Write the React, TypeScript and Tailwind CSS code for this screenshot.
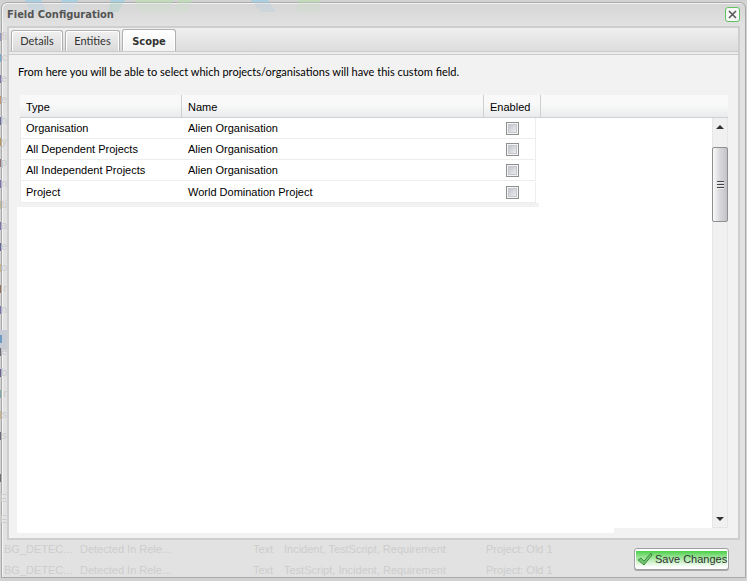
import React from 'react';

const rows = [
  { type: 'Organisation', name: 'Alien Organisation' },
  { type: 'All Dependent Projects', name: 'Alien Organisation' },
  { type: 'All Independent Projects', name: 'Alien Organisation' },
  { type: 'Project', name: 'World Domination Project' },
];

const edgeText = ['fi', 'c', 'e', 'e', 'h', 'y', 'p', 'n', 'ti', 'a', 'e', 'o', 'r', 'n', '', 'e', 'b', 'r', 'ls', 'ls', '', '', 'E', 'E'];

const edgeMarks = ['#7f86b8', '#5fa8cf', '#6b5f9a', '#c08a5a', '#56508f', '#b98a3f', '#8a5a5a', '#6a5aa0', '#b5b58a', '#6a5aa0', '#4a4a8a', '#c9ae7a', '#8a5a3a', '#6a5aa0', '', '#555555', '#54407a', '#6aa0a8', '#c9ae7a', '#55556a', '', '#555555'];

const behind = [
  ['BG_DETEC...', 'Detected In Rele...', 'Text', 'Incident, TestScript, Requirement', 'Project: Old 1'],
  ['BG_DETEC...', 'Detected In Rele...', 'Text', 'TestScript, Incident, Requirement', 'Project: Old 1'],
];

const boldFont = "font-['DejaVu_Sans_Condensed','DejaVu_Sans',sans-serif] font-bold";
const plainFont = "font-[Lato,'Noto_Sans',sans-serif]";

function Backdrop() {
  return (
    <div aria-hidden="true" className="pointer-events-none absolute inset-0">
      <svg className="absolute top-0 left-0 h-4 w-full">
        <g opacity="0.4">
          <path d="M25 0h16l6 12H31z" fill="#b9d3e2" />
          <path d="M62 0h16l-6 12H58z" fill="#c8dcec" />
          <path d="M111 0h14l-7 12h-10z" fill="#a9d3cb" />
          <path d="M135 0h38l-4 12h-30z" fill="#cfe0cb" />
          <path d="M178 0h14l-4 12h-14z" fill="#cfe0cb" />
          <path d="M251 0h17l8 12h-15z" fill="#bdd2de" />
          <path d="M298 0h22v12h-23z" fill="#cbdfc8" />
        </g>
        <path d="M25 0h16l1 2H26zM62 0h16l-1 2H61zM111 0h14l-1 2h-14zM251 0h17l1 2h-17z" fill="#a9cfe0" />
        <path d="M135 0h38v2h-38zM178 0h14v2h-14zM298 0h22v2h-22z" fill="#c2dcbb" />
      </svg>
      <div className="absolute top-[330px] left-0 h-5 w-[7px] bg-[#c7cbd3]" />
      <div className="absolute top-[335px] left-0 h-2 w-0.5 bg-[#6f9cc4]" />
      <div className="absolute top-[26px] left-0 flex w-[7px] flex-col items-end text-[11px] leading-[21px] text-[#cbcbcb]">
        {edgeText.map((t, i) => (
          <span key={i} className="block h-[21px]">{t}</span>
        ))}
      </div>
      <svg className="absolute top-[26px] left-0 h-[520px] w-0.5">
        {edgeMarks.map((c, i) => c && <rect key={i} x="0" y={i * 21 + 7} width="1" height="8" fill={c} opacity="0.8" />)}
      </svg>
    </div>
  );
}

function Tab({ label, active }: { label: string; active?: boolean }) {
  return (
    <button
      type="button"
      role="tab"
      aria-selected={!!active}
      className={`rounded-t-[3px] border border-b-0 border-[#b0b0b0] leading-5 shadow-[inset_1px_1px_0_#fff,inset_-1px_0_0_#fff] ${
        active
          ? `${boldFont} h-[22px] w-[54px] bg-linear-to-b from-white to-[#f2f2f2] pt-0.5 text-[11px] text-[#333]`
          : `${plainFont} h-[21px] bg-linear-to-b from-[#f0f0f0] to-[#dadada] text-[11px] text-[#333] ${label === 'Details' ? 'w-[52px]' : 'w-[55px]'}`
      }`}
    >
      {label}
    </button>
  );
}

function Scrollbar() {
  return (
    <div aria-hidden="true" className="absolute top-[23px] right-0 bottom-0 flex w-4 flex-col border-x border-b border-[#e6e6e6] bg-[#f0f0f0]">
      <svg viewBox="0 0 14 29" className="h-[29px] w-full shrink-0">
        <path d="M3 11l4-4 4 4z" fill="#333" />
      </svg>
      <div className="-mx-px flex h-[75px] shrink-0 flex-col items-center justify-center gap-px rounded-xs border border-[#8f8f8f] bg-linear-to-r from-[#fafafa] via-[#d8d8dc] to-[#c2c2c8]">
        <span className="h-0.5 w-[7px] border-t border-[#444] bg-[#eee]" />
        <span className="h-0.5 w-[7px] border-t border-[#444] bg-[#eee]" />
        <span className="h-0.5 w-[7px] border-t border-[#444] bg-[#eee]" />
      </div>
      <div className="flex-1" />
      <svg viewBox="0 0 14 14" className="h-[14px] w-full shrink-0">
        <path d="M3 4h8l-4 4z" fill="#333" />
      </svg>
    </div>
  );
}

function ScopeTable() {
  const th = 'border-r border-b border-[#d0d0d0] px-1.5 pt-0.5 pb-0 font-normal';
  return (
    <div className="relative flex flex-1 flex-col bg-white">
      <div className="flex bg-[#f2f2f2] pl-[3px]">
        <table className="w-full table-fixed border-separate border-spacing-0 text-left text-[11px] leading-4 text-black">
          <colgroup>
            <col className="w-[162px]" />
            <col className="w-[302px]" />
            <col className="w-[57px]" />
            <col />
          </colgroup>
          <thead>
            <tr className="h-[23px] bg-linear-to-b from-[#f9f9f9] from-40% to-[#e8eaec]">
              <th scope="col" className={th}>Type</th>
              <th scope="col" className={th}>Name</th>
              <th scope="col" className={th}>Enabled</th>
              <td className="border-b border-[#d0d0d0]" />
            </tr>
          </thead>
          <tbody className="[&>tr:last-child>td]:pt-px">
            {rows.map((r, i) => (
              <tr key={i} className="h-[21px] bg-white">
                <td className="h-[21px] border-b border-l border-[#ededed] py-0 pr-1.5 pl-[5px]">{r.type}</td>
                <td className="border-b border-[#ededed] px-1.5 py-0">{r.name}</td>
                <td className="p-0">
                  <div className="mr-[5px] flex h-[21px] items-center justify-center border-r border-b border-[#ededed] pl-[5px]">
                    <input
                      type="checkbox"
                      aria-label={`Enable ${r.type} ${r.name}`}
                      className="size-[13px] appearance-none border border-[#8e8f8f] bg-linear-to-br from-[#b8bcc4] to-[#f6f6f6] shadow-[inset_0_0_0_1px_#f4f4f4,inset_0_0_0_2px_#c4c8ce]"
                    />
                  </div>
                </td>
                <td />
              </tr>
            ))}
          </tbody>
        </table>
      </div>
      <div className="h-1 w-[522px] bg-[#f2f2f2]" />
      <Scrollbar />
    </div>
  );
}

export default function App() {
  return (
    <div className="relative flex min-h-screen flex-col bg-[#d2d2d2] px-px pt-0.5 pb-[3px] font-['Liberation_Sans',Arial,sans-serif]">
      <div role="dialog" aria-labelledby="title" className="flex flex-1 flex-col rounded-t-md border border-[#a9a9a9] bg-linear-to-b from-[#d6d6d6] to-[#e2e2e2] to-[24px] px-[5px] shadow-[inset_1px_1px_0_#f4f4f4]">
        <header className="relative z-10 flex h-[23px] items-center justify-between">
          <h1 id="title" className={`${boldFont} pt-px text-[11px] text-[#555]`}>Field Configuration</h1>
          <button type="button" aria-label="Close" className="flex size-[15px] items-center justify-center rounded-[3px] border border-[#5fc45f] bg-[#f6f6f6]">
            <svg viewBox="0 0 9 9" className="size-[9px]">
              <path d="M1 1l7 7M8 1l-7 7" stroke="#555" strokeWidth="1.5" />
            </svg>
          </button>
        </header>
        <main className="relative z-10 flex flex-1 flex-col border-2 border-[#cecece] bg-[#f2f2f2]">
          <div role="tablist" className="flex h-6 items-end gap-0.5 border-b border-[#cbcbcb] bg-linear-to-b from-[#f0f0f0] to-[#dcdcdc] px-0.5">
            <Tab label="Details" />
            <Tab label="Entities" />
            <Tab label="Scope" active />
          </div>
          <div className="h-[3px] border-b border-[#cbcbcb] bg-[#ececec]" />
          <div className="flex flex-1 flex-col px-2 pb-[5px]">
            <p className={`${plainFont} h-10 px-px pt-[9px] text-[11px] leading-4 text-black`}>
              From here you will be able to select which projects/organisations will have this custom field.
            </p>
            <div className="mr-0.5 flex flex-1 flex-col">
              <ScopeTable />
              <div className="h-[5px] w-[597px] bg-white" />
            </div>
          </div>
        </main>
        <footer className="relative z-10 flex h-[37px] justify-between pr-[11px]">
          <div aria-hidden="true" className="-ml-[3px] grid auto-rows-[21px] grid-cols-[76px_173px_31px_202px_1fr] text-[11px] leading-[19px] whitespace-nowrap text-[#cdcdcd]">
            {behind.map((cells, r) => cells.map((c, i) => <span key={`${r}-${i}`}>{c}</span>))}
          </div>
          <button type="button" className="mt-2 flex h-[22px] w-[95px] items-center rounded-[3px] border border-[#9f9fa4] bg-white px-px shadow-[0_1px_0_#aaa]">
            <span className="flex h-4 w-full items-center gap-0.5 bg-linear-to-b from-[#45cf45] to-white pl-px text-[11px] whitespace-nowrap text-[#333]">
              <svg viewBox="0 0 16 14" className="h-[14px] w-4 shrink-0">
                <path d="M1 8l3-2 3 3 7-8 1 2-8 10z" fill="#6fc36f" stroke="#3f8f3f" strokeWidth="1" strokeLinejoin="round" />
              </svg>
              Save Changes
            </span>
          </button>
        </footer>
      </div>
      <Backdrop />
    </div>
  );
}
